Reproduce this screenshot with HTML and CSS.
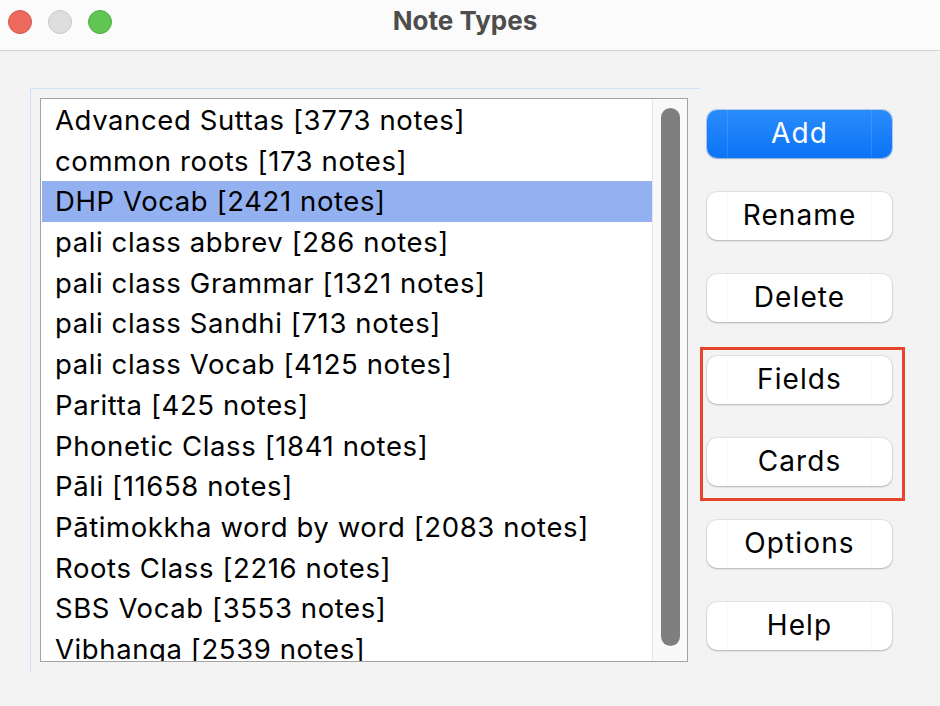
FILE: index.html
```html
<!DOCTYPE html>
<html>
<head>
<meta charset="utf-8">
<link rel="stylesheet" href="styles.css">
</head>
<body>
<div class="window">
  <header class="titlebar">
    <div class="lights">
      <span class="light red"></span>
      <span class="light gray"></span>
      <span class="light green"></span>
    </div>
    <div class="title">Note Types</div>
  </header>
  <main class="content">
    <div class="frame">
      <div class="listbox">
        <ul class="rows">
          <li class="row">Advanced Suttas [3773 notes]</li>
          <li class="row">common roots [173 notes]</li>
          <li class="row selected">DHP Vocab [2421 notes]</li>
          <li class="row">pali class abbrev [286 notes]</li>
          <li class="row">pali class Grammar [1321 notes]</li>
          <li class="row">pali class Sandhi [713 notes]</li>
          <li class="row">pali class Vocab [4125 notes]</li>
          <li class="row">Paritta [425 notes]</li>
          <li class="row">Phonetic Class [1841 notes]</li>
          <li class="row">Pāli [11658 notes]</li>
          <li class="row">Pātimokkha word by word [2083 notes]</li>
          <li class="row">Roots Class [2216 notes]</li>
          <li class="row">SBS Vocab [3553 notes]</li>
          <li class="row">Vibhanga [2539 notes]</li>
        </ul>
        <div class="scrolltrack"><div class="thumb"></div></div>
      </div>
    </div>
    <div class="buttons">
      <button class="btn primary">Add</button>
      <button class="btn">Rename</button>
      <button class="btn">Delete</button>
      <div class="highlight-group">
        <button class="btn">Fields</button>
        <button class="btn">Cards</button>
        <div class="annotation"></div>
      </div>
      <button class="btn">Options</button>
      <button class="btn">Help</button>
    </div>
  </main>
</div>
</body>
</html>
```
FILE: styles.css
```css
* { box-sizing: border-box; }
html, body { margin: 0; padding: 0; }
body {
  width: 940px;
  height: 706px;
  overflow: hidden;
  background: #f3f3f3;
  font-family: Inter, "Noto Sans", "Liberation Sans", sans-serif;
  color: #000;
}
.window { width: 940px; height: 706px; display: flex; flex-direction: column; }
.titlebar {
  position: relative;
  height: 51px;
  flex: none;
  background: #fbfbfb;
  border-bottom: 1px solid #d2d2d2;
  display: flex;
  align-items: center;
  justify-content: center;
}
.lights {
  position: absolute;
  left: 8px;
  top: 10px;
  display: flex;
  gap: 16px;
}
.light {
  width: 24px; height: 24px; border-radius: 50%;
  display: block;
}
.light.red { background: #ed6a5e; border: 1px solid #d4564b; }
.light.gray { background: #dedede; border: 1px solid #c9c9c9; }
.light.green { background: #61c554; border: 1px solid #4fae42; }
.title {
  font-size: 26px;
  font-weight: 700;
  color: #4d4d4d;
  margin-top: -10px;
  margin-left: -10px;
}
.content {
  display: flex;
  align-items: flex-start;
  padding: 37px 0 0 30px;
  position: relative;
}
.frame {
  border-top: 1px solid #cfe0f7;
  border-left: 1px solid #cfe0f7;
  padding: 9px 12px 10px 9px;
  width: 670px;
}
.listbox {
  width: 648px;
  height: 564px;
  border: 1px solid #a3a3a3;
  background: #fff;
  display: flex;
  overflow: hidden;
}
.rows {
  list-style: none;
  margin: 0;
  padding: 1px 0 0 1px;
  flex: 1;
  overflow: hidden;
}
.row {
  height: 40.7px;
  line-height: 40.7px;
  font-size: 27.5px;
  padding-left: 13px;
  white-space: nowrap;
  letter-spacing: 0.6px;
}
.row.selected { background: #93b0f1; }
.scrolltrack {
  width: 35px;
  flex: none;
  background: #f9f9f9;
  border-left: 1px solid #e8e8e8;
  padding: 9px 0 0 8px;
}
.thumb {
  width: 19px;
  height: 538px;
  border-radius: 10px;
  background: #7f7f7f;
}
.buttons {
  display: flex;
  flex-direction: column;
  gap: 34px;
  margin-left: 7px;
  margin-top: 22px;
}
.highlight-group {
  position: relative;
  display: flex;
  flex-direction: column;
  gap: 34px;
}
.annotation {
  position: absolute;
  left: -7px;
  top: -9px;
  width: 205px;
  height: 154px;
  border: 3px solid #e8442c;
  pointer-events: none;
}
.btn {
  position: relative;
  width: 185px;
  height: 48px;
  border: none;
  border-radius: 10px;
  background: #fff;
  font-family: Inter, "Noto Sans", "Liberation Sans", sans-serif;
  font-size: 28px;
  letter-spacing: 1.1px;
  color: #000;
  padding: 0 0 3px;
  box-shadow: 0 0 0 1px rgba(0,0,0,0.06), 0 1px 2px rgba(0,0,0,0.22);
  display: block;
}
.btn::before, .btn::after {
  content: "";
  position: absolute;
  top: 0;
  bottom: 0;
  width: 1px;
  background: rgba(0,0,0,0.025);
}
.btn::before { left: 20px; }
.btn::after { right: 20px; }
.btn.primary {
  background: linear-gradient(#2a8cfb, #0b74f6);
  color: #fff;
  box-shadow: 0 0 0 1px rgba(0,90,220,0.25), 0 1px 2px rgba(0,0,0,0.18);
}
.btn.primary::before, .btn.primary::after { background: rgba(255,255,255,0.12); }
```
